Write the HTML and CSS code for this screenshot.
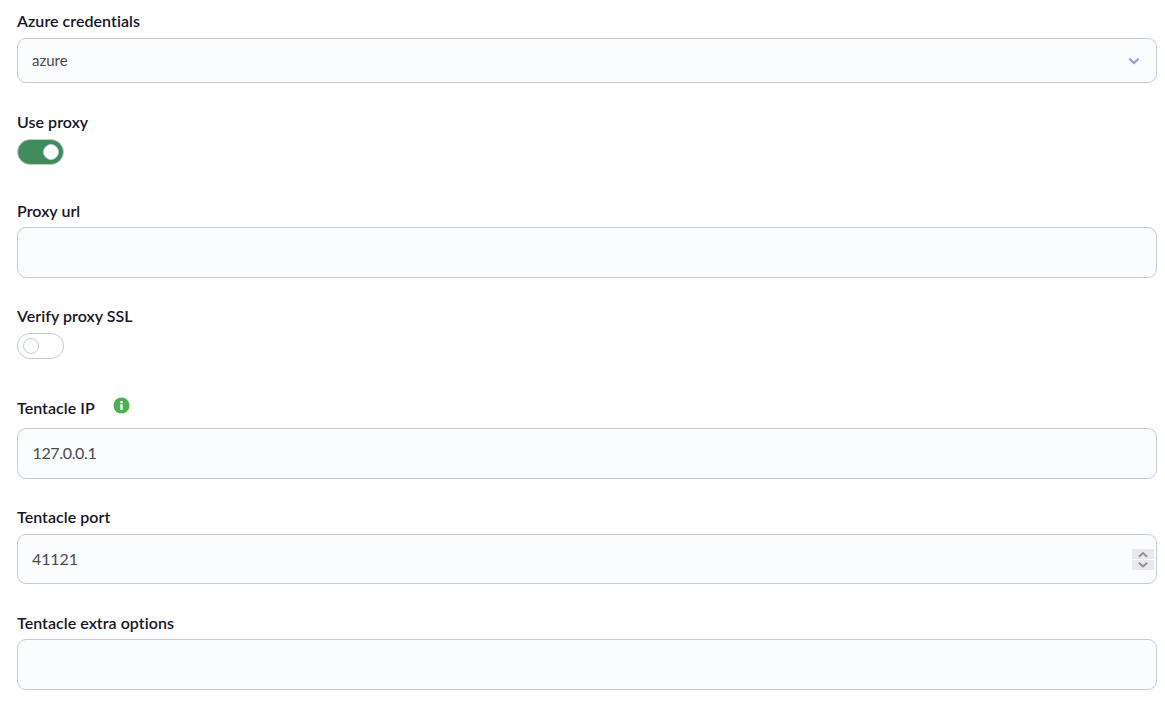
FILE: index.html
```
<!DOCTYPE html>
<html lang="en">
<head>
  <meta charset="UTF-8" />
  <meta name="viewport" content="width=device-width, initial-scale=1.0" />
  <title>Azure credentials</title>
  <link rel="stylesheet" href="styles.css">
</head>
<body>
  <form class="config-form">
    <div class="field">
      <label for="credentials">Azure credentials</label>
      <div class="control control-select" id="credentials" tabindex="0">
        <span>azure</span>
        <svg class="chevron" width="12" height="8" viewBox="0 0 12 8">
          <path d="M1.3 1.6 L6 6 L10.7 1.6" />
        </svg>
      </div>
    </div>

    <div class="field field-switch">
      <label for="useProxy">Use proxy</label>
      <input type="checkbox" class="switch" id="useProxy" checked />
    </div>

    <div class="field field-tight">
      <label for="proxyUrl">Proxy url</label>
      <input type="text" class="control" id="proxyUrl" />
    </div>

    <div class="field field-switch">
      <label for="verifySsl">Verify proxy SSL</label>
      <input type="checkbox" class="switch" id="verifySsl" />
    </div>

    <div class="field field-info">
      <label for="tentacleIp">Tentacle IP
        <svg class="info" width="17" height="17" viewBox="0 0 17 17">
          <circle cx="8.5" cy="8.5" r="8" />
          <rect x="7.3" y="4" width="2.4" height="2.2" />
          <rect x="7.3" y="7.2" width="2.4" height="5.8" />
        </svg>
      </label>
      <input type="text" class="control control-ip" id="tentacleIp" value="127.0.0.1" />
    </div>

    <div class="field">
      <label for="tentaclePort">Tentacle port</label>
      <div class="control control-number">
        <input type="text" inputmode="numeric" id="tentaclePort" value="41121" />
        <div class="spinner">
          <button type="button" aria-label="Increase">
            <svg width="12" height="8" viewBox="0 0 12 8"><path d="M1.8 6.8 L6 3 L10.2 6.8" /></svg>
          </button>
          <button type="button" aria-label="Decrease">
            <svg width="12" height="8" viewBox="0 0 12 8"><path d="M1.8 1.7 L6 5.5 L10.2 1.7" /></svg>
          </button>
        </div>
      </div>
    </div>

    <div class="field field-tight">
      <label for="extraOptions">Tentacle extra options</label>
      <input type="text" class="control" id="extraOptions" />
    </div>
  </form>
</body>
</html>
```
FILE: styles.css
```
*,
*::before {
  box-sizing: border-box;
}
body {
  font-family: Lato, sans-serif;
  background-color: #fff;
  margin: 0;
  padding: 12px 8px 0 17px;
  color: #161628;
}
.field {
  display: flex;
  flex-direction: column;
  margin-bottom: 30px;
}
.field label {
  display: flex;
  font-size: 16px;
  font-weight: 600;
  line-height: 18px;
  letter-spacing: 0.04px;
  margin-bottom: 8px;
}
.field-tight {
  margin-bottom: 29px;
}
.field-tight label {
  margin-bottom: 7px;
}
.field-switch {
  margin-bottom: 37px;
}
.field-info {
  padding-top: 3px;
  margin-bottom: 29px;
}
.field-info label {
  margin-bottom: 11px;
}
.control {
  width: 100%;
  height: 51px;
  padding: 0 15px 2px;
  border: 1px solid #c0ccdc;
  border-radius: 9px;
  background-color: #fbfcfe;
  color: #4a4a4a;
  font-family: inherit;
  font-size: 16px;
  outline: none;
}
.control-select {
  display: flex;
  align-items: center;
  justify-content: space-between;
  height: 45px;
  padding: 0 16px 0 14px;
  font-size: 15px;
}
.control-select span {
  padding-bottom: 2px;
}
.control-ip {
  padding-left: 14.5px;
  letter-spacing: -0.35px;
}
.chevron {
  fill: none;
  stroke: #98a5c4;
  stroke-width: 2.2;
}
.control-number {
  display: flex;
  align-items: center;
  height: 50px;
  padding: 0 2px 0 14px;
}
.control-number input {
  flex: 1;
  padding: 0 0 2px;
  border: none;
  background: none;
  color: inherit;
  font: inherit;
  letter-spacing: -0.1px;
  outline: none;
}
.spinner {
  display: flex;
  flex-direction: column;
  gap: 1px;
}
.spinner button {
  display: flex;
  align-items: center;
  justify-content: center;
  width: 22px;
  height: 10px;
  padding: 0;
  border: none;
  background-color: #e9e9ed;
}
.spinner svg {
  fill: none;
  stroke: #8f8f9d;
  stroke-width: 2;
}
.switch {
  appearance: none;
  display: flex;
  align-items: center;
  width: 47px;
  height: 26px;
  margin: 0;
  padding: 0 4px 0 5px;
  border: 1px solid #c0ccdc;
  border-radius: 13px;
  background-color: #fff;
}
.switch::before {
  content: "";
  width: 16px;
  height: 16px;
  border: 1px solid #c0ccdc;
  border-radius: 50%;
  background-color: #fff;
}
.switch:checked {
  justify-content: flex-end;
  background-color: #3f8b5b;
}
.info {
  margin: -2px 0 0 18px;
  fill: #fff;
}
.info circle {
  fill: #4caf50;
}
```
